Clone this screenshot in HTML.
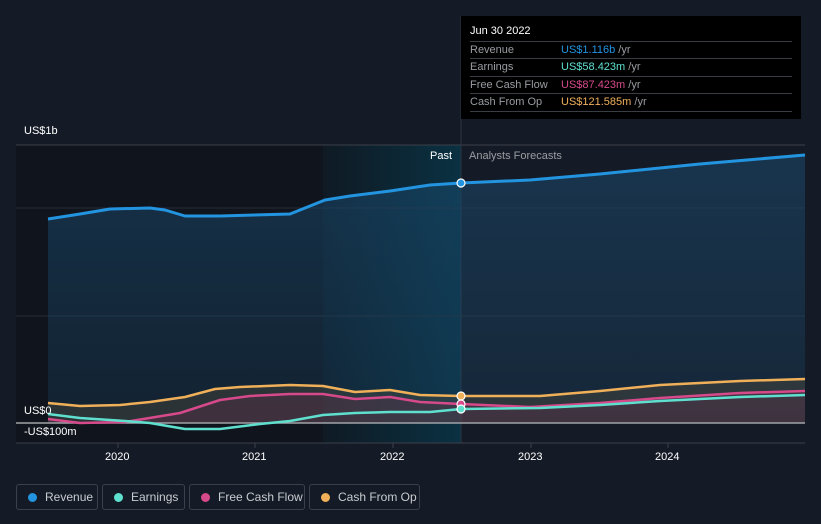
<!DOCTYPE html>
<html><head><style>
body{margin:0;background:#151b26;font-family:"Liberation Sans",sans-serif;}
.w{position:relative;width:821px;height:524px;overflow:hidden;background:#151b26}
.tt{position:absolute;left:461px;top:16px;width:340px;height:103px;background:#000;color:#fff;font-size:11px}
.tt .h{position:absolute;left:9px;top:9px;font-size:11px}
.tt .r{position:absolute;left:9px;width:322px;height:17px;border-top:1px solid #3a3d44;line-height:17px;color:#9a9ca2}
.tt .r b{position:absolute;left:91px;font-weight:normal}
.tt .r i{font-style:normal;color:#9a9ca2}
.lg{position:absolute;top:484px;height:26px;border:1px solid #3a404c;border-radius:3px;color:#c8cbd0;font-size:12px;line-height:24px;box-sizing:border-box;padding-left:28px;white-space:nowrap}
.lg:before{content:"";position:absolute;left:11px;top:8px;width:9px;height:9px;border-radius:50%;background:var(--c)}
.ax{position:absolute;color:#fff;font-size:11px}
</style></head><body><div class="w">
<svg width="821" height="524" style="position:absolute;left:0;top:0">
<defs>
<linearGradient id="hl" x1="0" x2="1"><stop offset="0" stop-color="#0f1a24"/><stop offset="1" stop-color="#0a3142"/></linearGradient>
<linearGradient id="rf" x1="0" y1="0" x2="0" y2="1"><stop offset="0" stop-color="#1a4a6e" stop-opacity=".55"/><stop offset="1" stop-color="#1a4a6e" stop-opacity=".25"/></linearGradient>
</defs>
<rect x="16" y="145" width="307" height="298" fill="#10141c"/>
<rect x="323" y="145" width="138" height="298" fill="url(#hl)"/>
<line x1="16" y1="145" x2="805" y2="145" stroke="#3a3f49"/>
<line x1="16" y1="208" x2="805" y2="208" stroke="#262c37"/>
<line x1="16" y1="316" x2="805" y2="316" stroke="#262c37"/>
<line x1="461" y1="16" x2="461" y2="443" stroke="#2b3442"/>
<path d="M48,219 L80,214 110,209 150,208 165,210 185,216 220,216 290,214 305,208 325,200 350,196 390,191 430,185 461,183 530,180 600,174 700,164 805,155 L805,423 L48,423Z" fill="url(#rf)"/>
<path d="M48,403 L80,406 120,405 150,402 185,397 215,389 240,387 290,385 323,386 355,392 390,390 420,395 461,396 540,396 600,391 660,385 740,381 805,379 L805,423 L48,423Z" fill="#5a5240" opacity=".35"/>
<path d="M48,419 L80,423 125,422 180,413 220,400 250,396 290,394 323,394 355,399 390,397 420,402 461,404 530,407 600,403 660,398 740,393 805,391 L805,423 L48,423Z" fill="#6a3050" opacity=".3"/>
<line x1="16" y1="423" x2="805" y2="423" stroke="#a0a3a8" stroke-width="1.5"/>
<line x1="16" y1="443" x2="805" y2="443" stroke="#3a3f49"/>
<g fill="none" stroke-width="2.5" stroke-linejoin="round">
<polyline stroke="#f0b05a" points="48,403 80,406 120,405 150,402 185,397 215,389 240,387 290,385 323,386 355,392 390,390 420,395 461,396 540,396 600,391 660,385 740,381 805,379"/>
<polyline stroke="#d6498a" points="48,419 80,423 125,422 180,413 220,400 250,396 290,394 323,394 355,399 390,397 420,402 461,404 530,407 600,403 660,398 740,393 805,391"/>
<polyline stroke="#5fe0cf" points="48,414 80,418 125,421 150,423 185,429 220,429 260,424 290,421 323,415 355,413 390,412 430,412 461,409 540,408 600,405 660,401 740,397 805,395"/>
<polyline stroke="#2394e0" stroke-width="3" points="48,219 80,214 110,209 150,208 165,210 185,216 220,216 290,214 305,208 325,200 350,196 390,191 430,185 461,183 530,180 600,174 700,164 805,155"/>
</g>
<g stroke="#fff" stroke-width="1.2">
<circle cx="461" cy="183" r="4" fill="#2394e0"/>
<circle cx="461" cy="396" r="4" fill="#f0b05a"/>
<circle cx="461" cy="404" r="4" fill="#d6498a"/>
<circle cx="461" cy="409" r="4" fill="#5fe0cf"/>
</g>
<g stroke="#3a3f49"><line x1="118" y1="443" x2="118" y2="448"/><line x1="255" y1="443" x2="255" y2="448"/><line x1="393" y1="443" x2="393" y2="448"/><line x1="531" y1="443" x2="531" y2="448"/><line x1="668" y1="443" x2="668" y2="448"/></g>
</svg>
<div class="ax" style="left:24px;top:125px">US$1b</div>
<div class="ax" style="left:24px;top:405px">US$0</div>
<div class="ax" style="left:24px;top:426px">-US$100m</div>
<div class="ax" style="left:430px;top:150px">Past</div>
<div class="ax" style="left:469px;top:150px;color:#9a9ca2">Analysts Forecasts</div>
<div class="ax" style="left:105px;top:451px">2020</div>
<div class="ax" style="left:242px;top:451px">2021</div>
<div class="ax" style="left:380px;top:451px">2022</div>
<div class="ax" style="left:518px;top:451px">2023</div>
<div class="ax" style="left:655px;top:451px">2024</div>
<div class="tt"><div class="h">Jun 30 2022</div>
<div class="r" style="top:25px">Revenue<b style="color:#2394e0">US$1.116b <i>/yr</i></b></div>
<div class="r" style="top:42px">Earnings<b style="color:#5fe0cf">US$58.423m <i>/yr</i></b></div>
<div class="r" style="top:60px">Free Cash Flow<b style="color:#d6498a">US$87.423m <i>/yr</i></b></div>
<div class="r" style="top:77px">Cash From Op<b style="color:#f0b05a">US$121.585m <i>/yr</i></b></div>
<div style="position:absolute;left:9px;top:95px;width:322px;border-top:1px solid #3a3d44"></div>
</div>
<div class="lg" style="left:16px;width:82px;--c:#2394e0">Revenue</div>
<div class="lg" style="left:102px;width:83px;--c:#5fe0cf">Earnings</div>
<div class="lg" style="left:189px;width:116px;--c:#d6498a">Free Cash Flow</div>
<div class="lg" style="left:309px;width:111px;--c:#f0b05a">Cash From Op</div>
</div></body></html>
